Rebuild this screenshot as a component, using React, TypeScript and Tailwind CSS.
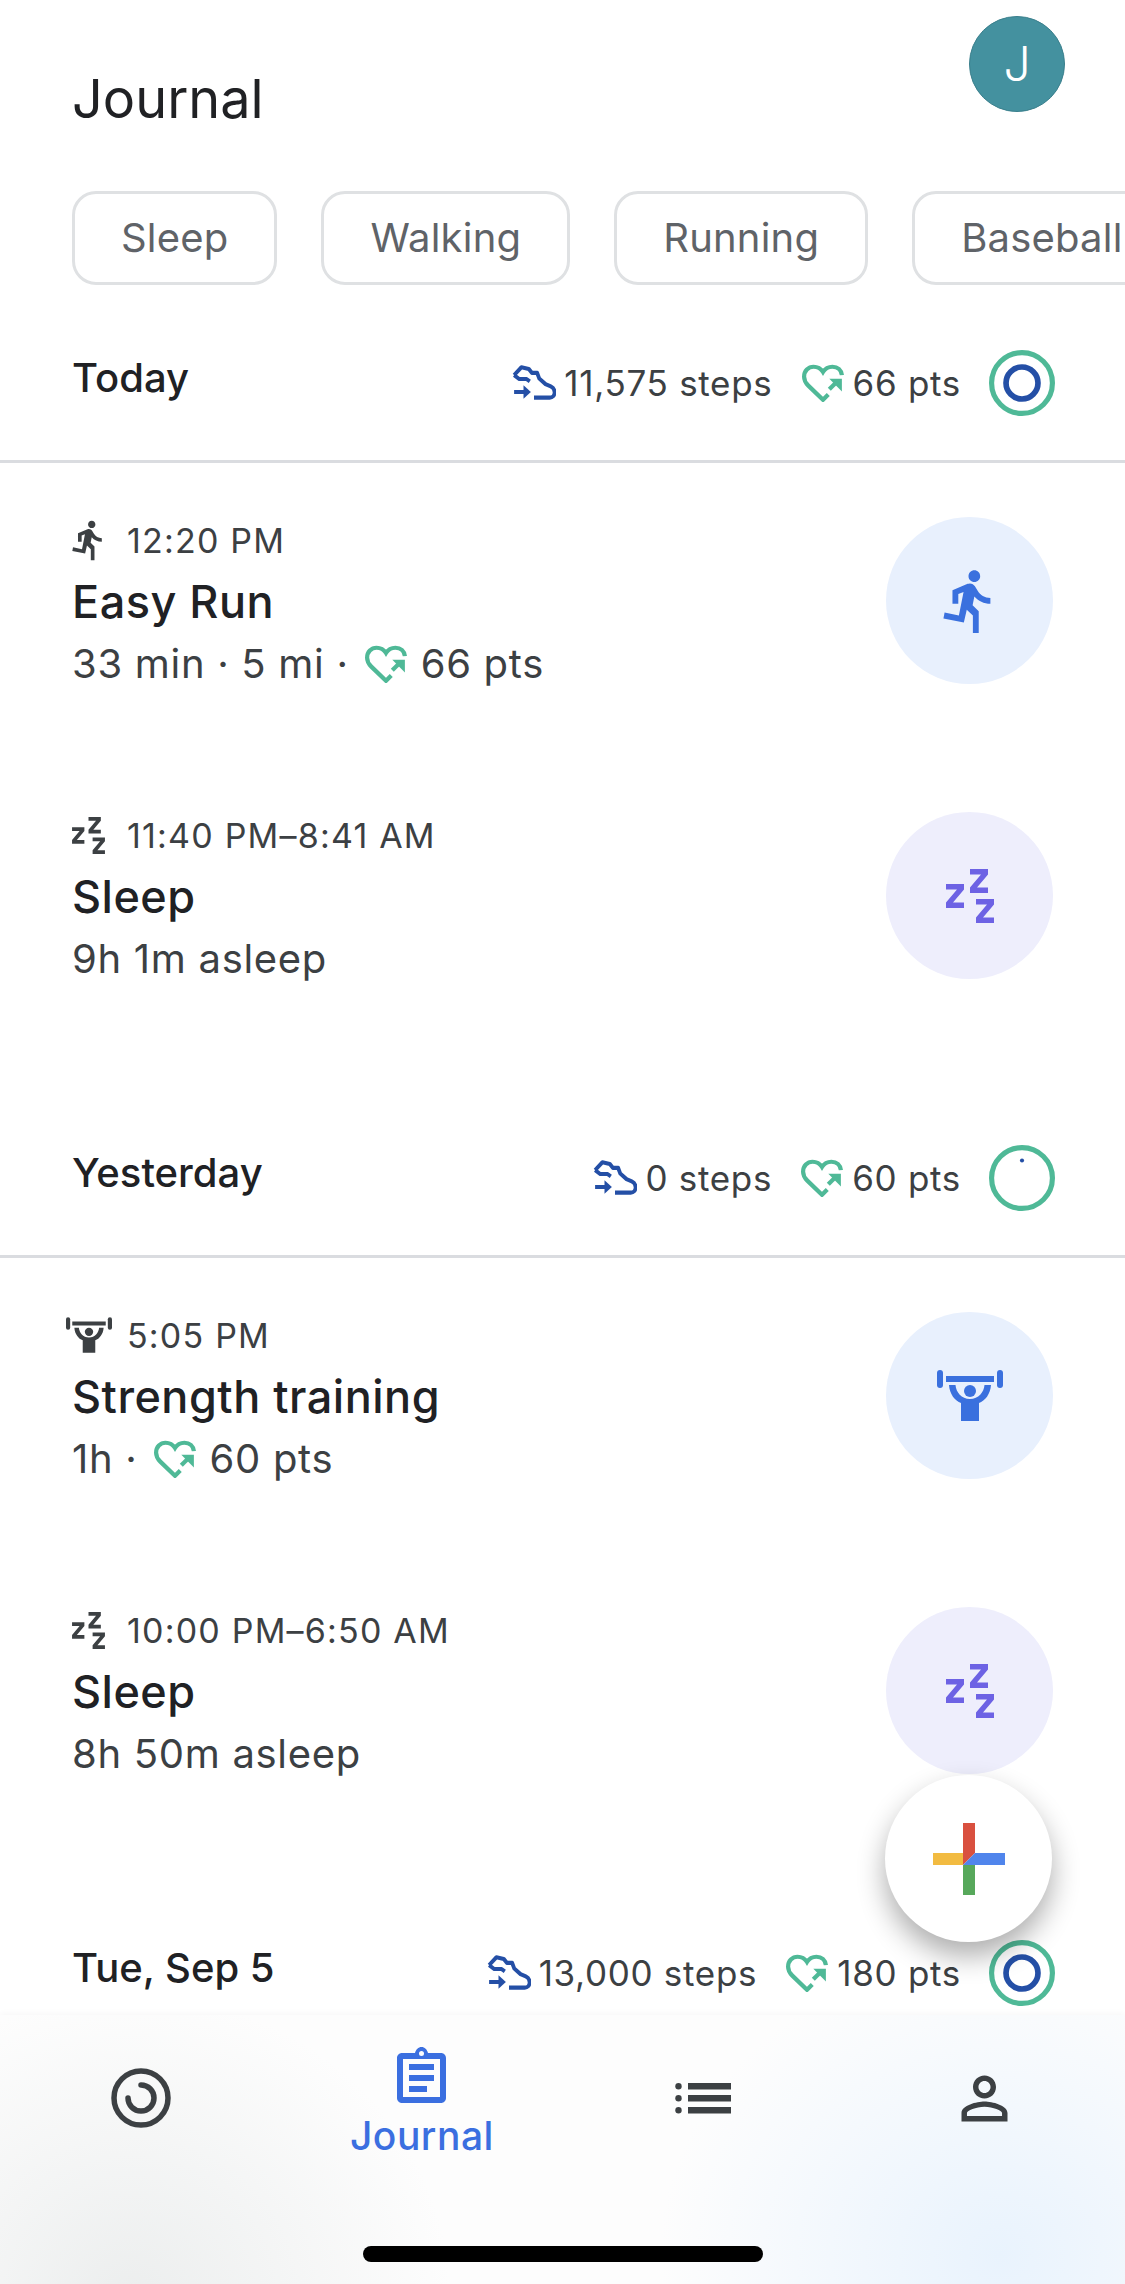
import type { ReactNode } from 'react'

const RUN_PATH =
  'M13.49 5.48c1.1 0 2-.9 2-2s-.9-2-2-2-2 .9-2 2 .9 2 2 2zm-3.6 13.9l1-4.4 2.1 2v6h2v-7.5l-2.1-2 .6-3c1.3 1.5 3.3 2.5 5.5 2.5v-2c-1.9 0-3.5-1-4.3-2.4l-1-1.6c-.4-.6-1-1-1.7-1-.3 0-.5.1-.8.1l-5.2 2.2v4.7h2v-3.4l1.8-.7-1.6 8.1-4.9-1-.4 2 7 1.4z'
const ZZZ_PATH =
  'M0 15h18v5.500L7 33.500h11V39H0v-5.500L11 20.500H0zM24 0h18v5.500L31 18.500h11V24H24v-5.500L35 5.500H24zM30 30h18v5.500L37 48.500h11V54H30v-5.500L41 35.500H30z'
const LIFT_PATH =
  'M9 6h48v6H9zM12 15h6.500c.5 7 6 14 14.500 14s14-7 14.500-14H54c-.5 9-6 16-12 18v18H24V33c-6-2-11.500-9-12-18z'

function RunIcon({ className }: { className: string }) {
  return (
    <svg viewBox="0 0 24 24" className={className} fill="currentColor">
      <path d={RUN_PATH} />
    </svg>
  )
}

function ZzzIcon({ className }: { className: string }) {
  return (
    <svg viewBox="0 0 48 54" className={className} fill="currentColor">
      <path d={ZZZ_PATH} />
    </svg>
  )
}

function LiftIcon({ className }: { className: string }) {
  return (
    <svg viewBox="0 0 66 51" className={className} fill="currentColor">
      <rect x="0" y="0" width="6" height="18" rx="3" />
      <rect x="60" y="0" width="6" height="18" rx="3" />
      <circle cx="33" cy="21" r="6" />
      <path d={LIFT_PATH} />
    </svg>
  )
}

function HeartIcon({ className }: { className: string }) {
  return (
    <svg viewBox="0 0 40 36" className={className} fill="none" stroke="#4fb997" strokeWidth="4">
      <path d="M25 29l-5 5L6 20.500C3 17.500 2 15 2 12 2 6.500 6 2.500 11 2.500c3.500 0 7 1.800 9 5 2-3.200 5.500-5 9-5 5 0 8.500 3.500 9 8" />
      <path d="M26 24l7-7" />
      <path d="M26 14h12v12z" fill="#4fb997" stroke="none" />
    </svg>
  )
}

function StepsIcon() {
  return (
    <svg viewBox="0 0 42 32" className="w-[44px] h-[36px] shrink-0" preserveAspectRatio="none" fill="none" stroke="#244fa6" strokeWidth="3.600" strokeLinejoin="round">
      <path d="M2 9l7-7 7 1.500L19 7h5l2 5 6 5 5 2c5 2 5 10-1 10H21" />
      <path d="M2 9l5 3.500h7l3 2" />
      <path d="M2 24h12" />
      <path d="M11 18l7 6-7 6z" fill="#244fa6" stroke="none" />
    </svg>
  )
}

function Ring({ inner }: { inner: 'full' | 'dot' }) {
  return (
    <svg viewBox="0 0 64 64" className="w-[66px] h-[66px] shrink-0 ml-[28px]" fill="none">
      <circle cx="32" cy="32" r="29.500" stroke="#4fb997" strokeWidth="5" />
      {inner === 'full' ? (
        <circle cx="32" cy="32" r="15.500" stroke="#244fa6" strokeWidth="5.500" />
      ) : (
        <circle cx="32" cy="15" r="2" fill="#244fa6" />
      )}
    </svg>
  )
}

type Activity = {
  kind: 'run' | 'sleep' | 'lift'
  time: string
  title: string
  detail: ReactNode
}

type Day = {
  label: string
  steps: string
  pts: string
  inner: 'full' | 'dot'
  items: Activity[]
}

const days: Day[] = [
  {
    label: 'Today',
    steps: '11,575 steps',
    pts: '66 pts',
    inner: 'full',
    items: [
      {
        kind: 'run',
        time: '12:20 PM',
        title: 'Easy Run',
        detail: (
          <>
            33 min · 5 mi ·
            <HeartIcon className="w-[42px] h-[38px] ml-[16px] mr-[14px]" />
            66 pts
          </>
        ),
      },
      { kind: 'sleep', time: '11:40 PM–8:41 AM', title: 'Sleep', detail: '9h 1m asleep' },
    ],
  },
  {
    label: 'Yesterday',
    steps: '0 steps',
    pts: '60 pts',
    inner: 'dot',
    items: [
      {
        kind: 'lift',
        time: '5:05 PM',
        title: 'Strength training',
        detail: (
          <>
            1h ·
            <HeartIcon className="w-[42px] h-[38px] ml-[16px] mr-[14px]" />
            60 pts
          </>
        ),
      },
      { kind: 'sleep', time: '10:00 PM–6:50 AM', title: 'Sleep', detail: '8h 50m asleep' },
    ],
  },
]

function SmallIcon({ kind }: { kind: Activity['kind'] }) {
  if (kind === 'run') return <RunIcon className="w-[44px] h-[44px] -ml-[5px] mr-[16px]" />
  if (kind === 'sleep') return <ZzzIcon className="w-[33px] h-[37px] mr-[22px]" />
  return <LiftIcon className="w-[46px] h-[36px] -ml-[6px] mr-[15px]" />
}

function BigIcon({ kind }: { kind: Activity['kind'] }) {
  if (kind === 'run') {
    return (
      <div className="w-[167px] h-[167px] rounded-full bg-[#e8f0fd] flex items-center justify-center text-[#3a70de] shrink-0">
        <RunIcon className="w-[70px] h-[70px]" />
      </div>
    )
  }
  if (kind === 'sleep') {
    return (
      <div className="w-[167px] h-[167px] rounded-full bg-[#eeeefc] flex items-center justify-center text-[#6d62e4] shrink-0">
        <ZzzIcon className="w-[48px] h-[54px]" />
      </div>
    )
  }
  return (
    <div className="w-[167px] h-[167px] rounded-full bg-[#e8f0fd] flex items-center justify-center text-[#3a70de] shrink-0">
      <LiftIcon className="w-[66px] h-[51px]" />
    </div>
  )
}

function SummaryRow({ label, steps, pts, inner }: { label: string; steps: string; pts: string; inner: 'full' | 'dot' }) {
  return (
    <div className="h-[110px] flex items-start justify-between">
      <div className="text-[40px] leading-[50px] font-medium text-[#202124] pt-[19px]">{label}</div>
      <div className="flex items-center pt-[16px] text-[35px] leading-[60px] text-[#3c4043] tracking-[0.7px]">
        <StepsIcon />
        <span className="ml-[8px] mr-[29px]">{steps}</span>
        <HeartIcon className="w-[42px] h-[38px] mr-[9px]" />
        <span>{pts}</span>
        <Ring inner={inner} />
      </div>
    </div>
  )
}

function ActivityRow({ item }: { item: Activity }) {
  return (
    <div className="flex items-start justify-between h-[167px]">
      <div className="pt-[1px]">
        <div className="flex items-center h-[44px] text-[34px] tracking-[1.2px] text-[#3c4043]">
          <SmallIcon kind={item.kind} />
          {item.time}
        </div>
        <div className="text-[45px] leading-[62px] tracking-[0.5px] font-medium text-[#202124] mt-[9px]">{item.title}</div>
        <div className="flex items-center h-[62px] mt-[0px] text-[40px] tracking-[0.7px] text-[#3c4043]">{item.detail}</div>
      </div>
      <BigIcon kind={item.kind} />
    </div>
  )
}

function NavIcons() {
  return (
    <div className="grid grid-cols-4 h-[160px] text-[#3c4043]">
      <div className="flex justify-center pt-[53px]">
        <svg viewBox="0 0 60 60" className="w-[60px] h-[60px]" fill="none" stroke="currentColor" strokeWidth="5.500">
          <circle cx="30" cy="30" r="27" />
          <path d="M30 17a13 13 0 1 1-13 13" strokeLinecap="round" />
        </svg>
      </div>
      <div className="flex flex-col items-center pt-[32px] text-[#3b6fe0]">
        <svg viewBox="0 0 49 56" className="w-[49px] h-[56px]" fill="currentColor">
          <path fillRule="evenodd" d="M5 6h13c.8-3.400 3.400-6 6.500-6S30.200 2.600 31 6h13c2.800 0 5 2.200 5 5v40c0 2.800-2.200 5-5 5H5c-2.800 0-5-2.200-5-5V11c0-2.800 2.200-5 5-5zm1 6v38h37V12H6zM24.500 4a2.500 2.500 0 100 5 2.500 2.500 0 000-5z" />
          <path d="M12 17h25v6H12zM12 28h25v6H12zM12 39h18v6H12z" />
        </svg>
        <div className="text-[39px] leading-[44px] tracking-[0.5px] font-medium mt-[11px]">Journal</div>
      </div>
      <div className="flex justify-center pt-[68px]">
        <svg viewBox="0 0 56 31" className="w-[56px] h-[31px]" fill="currentColor">
          <rect x="13" y="0" width="43" height="6.500" />
          <rect x="13" y="12" width="43" height="6.500" />
          <rect x="13" y="24" width="43" height="6.500" />
          <circle cx="3.500" cy="3.200" r="3.200" />
          <circle cx="3.500" cy="15.200" r="3.200" />
          <circle cx="3.500" cy="27.200" r="3.200" />
        </svg>
      </div>
      <div className="flex justify-center pt-[49px]">
        <svg viewBox="0 0 24 24" className="w-[69px] h-[69px]" fill="currentColor">
          <path d="M12 5.900c1.160 0 2.100.94 2.100 2.100s-.94 2.100-2.100 2.100S9.900 9.160 9.900 8s.94-2.100 2.100-2.100m0 9c2.970 0 6.100 1.460 6.100 2.100v1.100H5.900V17c0-.64 3.130-2.100 6.100-2.100M12 4C9.790 4 8 5.790 8 8s1.790 4 4 4 4-1.790 4-4-1.790-4-4-4zm0 9c-2.670 0-8 1.340-8 4v3h16v-3c0-2.660-5.330-4-8-4z" />
        </svg>
      </div>
    </div>
  )
}

export default function App() {
  return (
    <div className="relative w-[1125px] h-[2284px] overflow-hidden bg-white flex flex-col font-['Inter',sans-serif]">
      <div className="flex-1 overflow-hidden">
        <div className="flex items-start justify-between h-[191px] pl-[72px] pr-[60px]">
          <div className="text-[54px] leading-[64px] text-[#202124] mt-[67px]">Journal</div>
          <div className="w-[96px] h-[96px] rounded-full bg-[#44919f] border border-[#3a7f8c] text-white text-[48px] font-light flex items-center justify-center mt-[16px]">
            J
          </div>
        </div>

        <div className="flex gap-[44px] pl-[72px] h-[94px] overflow-hidden">
          {['Sleep', 'Walking', 'Running', 'Baseball'].map((c) => (
            <div key={c} className="h-[94px] px-[46px] rounded-[24px] border-[3px] border-[#dfe1e3] text-[40px] tracking-[0.2px] text-[#5f6368] flex items-center shrink-0">
              {c}
            </div>
          ))}
        </div>

        {days.map((d) => (
          <div key={d.label}>
            <div className="pl-[72px] pr-[70px] border-b-[3px] border-[#dadce0] h-[178px] pt-[49px]">
              <SummaryRow label={d.label} steps={d.steps} pts={d.pts} inner={d.inner} />
            </div>
            <div className="flex flex-col gap-[128px] pl-[72px] pr-[72px] pt-[54px] pb-[101px]">
              {d.items.map((item) => (
                <ActivityRow key={item.time} item={item} />
              ))}
            </div>
          </div>
        ))}

        <div className="pl-[72px] pr-[70px] pt-[49px]">
          <SummaryRow label="Tue, Sep 5" steps="13,000 steps" pts="180 pts" inner="full" />
        </div>
      </div>

      <div className="h-[269px] shrink-0 flex flex-col bg-[#fdfdfd] bg-[radial-gradient(ellipse_320px_300px_at_130px_280px,#eceeee,transparent),radial-gradient(ellipse_340px_300px_at_1000px_240px,#e9f3fd,transparent)] shadow-[0_-2px_6px_rgba(0,0,0,0.03)]">
        <NavIcons />
        <div className="mt-auto mb-[22px] mx-auto w-[400px] h-[16px] rounded-full bg-black" />
      </div>

      <div className="absolute left-[885px] top-[1775px] w-[167px] h-[167px] rounded-full bg-white shadow-[0_14px_28px_rgba(0,0,0,0.32)] flex items-center justify-center">
        <svg viewBox="0 0 72 72" className="w-[72px] h-[72px]">
          <polygon points="30,0 42,0 42,30 30,42" fill="#d9503f" />
          <polygon points="42,30 72,30 72,42 30,42" fill="#5085ec" />
          <polygon points="30,42 42,42 42,72 30,72" fill="#57a85b" />
          <polygon points="0,30 30,30 30,42 0,42" fill="#f2bb41" />
        </svg>
      </div>
    </div>
  )
}
